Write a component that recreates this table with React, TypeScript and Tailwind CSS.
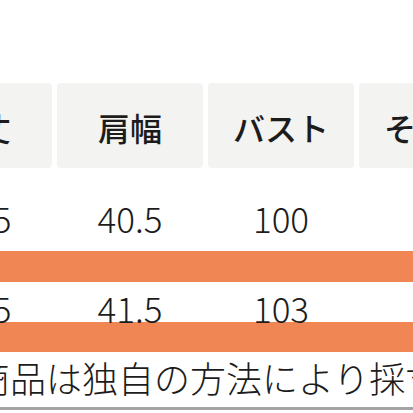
export default function App() {
  const font = { fontFamily: '"Noto Sans CJK JP", "Noto Sans", sans-serif' }
  const headers = ["着丈", "肩幅", "バスト", "その他"]
  const rows = [
    ["66.5", "40.5", "100", "64"],
    ["67.5", "41.5", "103", "65"],
  ]

  return (
    <div className="w-[413px] h-[413px] overflow-hidden bg-white text-[#1c1c1c]" style={font}>
      <div className="h-[83px]" />

      {/* header */}
      <div className="ml-[-94px] grid grid-cols-[146px_146px_146px_146px] gap-x-[5px]">
        {headers.map((h) => (
          <div
            key={h}
            className="h-[85px] rounded-[4px] bg-[#f3f3f1] pt-[28px] text-center text-[32px] leading-none font-medium whitespace-nowrap"
          >
            {h}
          </div>
        ))}
      </div>

      {/* row 1 */}
      <div className="ml-[-94px] grid h-[83px] grid-cols-[146px_146px_146px_146px] gap-x-[5px] pt-[32px]">
        {rows[0].map((v, i) => (
          <div key={i} className="text-center text-[35px] leading-none font-light">
            {v}
          </div>
        ))}
      </div>

      <div className="h-[31px] bg-[#ef8654]" />

      {/* row 2 */}
      <div className="ml-[-94px] grid h-[40px] grid-cols-[146px_146px_146px_146px] gap-x-[5px] pt-[8px]">
        {rows[1].map((v, i) => (
          <div key={i} className="text-center text-[35px] leading-none font-light">
            {v}
          </div>
        ))}
      </div>

      <div className="h-[30px] bg-[#ef8654]" />

      {/* note */}
      <div className="h-[58px] border-b-[3px] border-[#a3a3a3] pt-[7px]">
        <div className="ml-[-26px] whitespace-nowrap text-[36px] leading-none font-light">
          商品は独自の方法により採寸しております。
        </div>
      </div>
    </div>
  )
}
